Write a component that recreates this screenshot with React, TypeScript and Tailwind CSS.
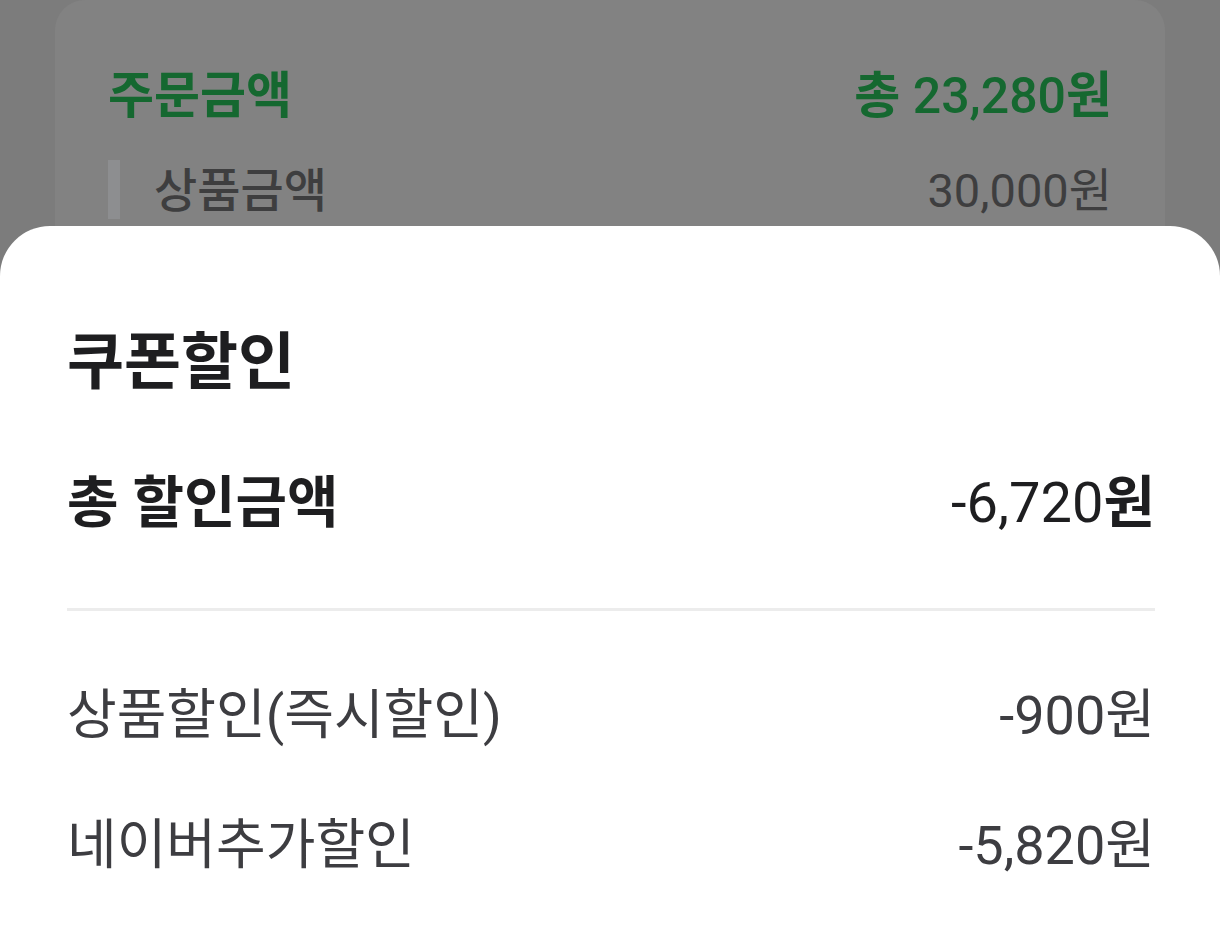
import React from "react";

const font = { fontFamily: '"Roboto", "Noto Sans CJK KR", sans-serif' };

export default function App() {
  return (
    <div
      className="relative h-[934px] w-full overflow-hidden bg-[#7c7c7c]"
      style={font}
    >
      {/* background card (dimmed) */}
      <div className="mx-[55px] h-[400px] rounded-[30px] bg-[#828282] pl-[53px] pr-[53px] pt-[66px]">
        <div className="flex items-center justify-between text-[50px] leading-[60px] text-[#156830]">
          <span className="font-bold">주문금액</span>
          <span>
            <span className="font-bold">총 </span>
            <span className="font-medium">23,280</span>
            <span className="font-bold">원</span>
          </span>
        </div>
        <div className="mt-[34px] flex">
          <div className="w-[12px] bg-[#8d8e90]" />
          <div className="flex flex-1 items-center justify-between pl-[34px] pt-[3px] text-[47px] leading-[56px] text-[#3e3e3f]">
            <span className="font-medium">상품금액</span>
            <span>30,000원</span>
          </div>
        </div>
      </div>

      {/* bottom sheet */}
      <div className="absolute inset-x-0 bottom-0 top-[226px] rounded-t-[50px] bg-white pl-[67px] pr-[65px] pt-[102px]">
        <div className="text-[62px] font-bold leading-[70px] text-[#1e1e20]">
          쿠폰할인
        </div>
        <div className="mt-[73px] flex items-center justify-between text-[56px] leading-[64px] text-[#1e1e20]">
          <span className="font-bold">총 할인금액</span>
          <span>
            <span className="font-normal">-6,720</span>
            <span className="font-bold">원</span>
          </span>
        </div>
        <div className="mt-[73px] h-[3px] bg-[#ececec]" />
        <div className="mt-[73px] flex items-center justify-between text-[54px] leading-[64px] text-[#3d3d41]">
          <span>상품할인(즉시할인)</span>
          <span>-900원</span>
        </div>
        <div className="mt-[66px] flex items-center justify-between text-[54px] leading-[64px] text-[#3d3d41]">
          <span>네이버추가할인</span>
          <span>-5,820원</span>
        </div>
      </div>
    </div>
  );
}
